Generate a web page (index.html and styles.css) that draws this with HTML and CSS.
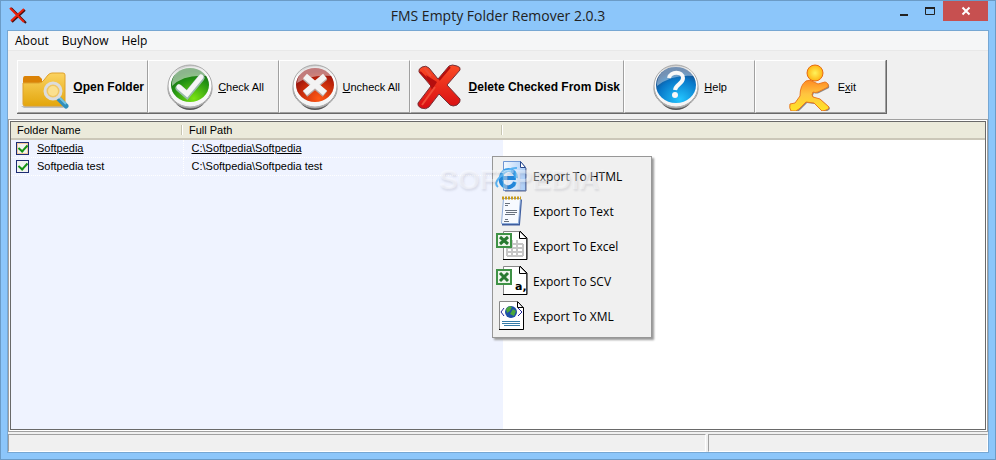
FILE: index.html
```html
<!DOCTYPE html>
<html lang="en">
<head>
    <meta charset="UTF-8">
    <title>FMS Empty Folder Remover 2.0.3</title>
    <link rel="stylesheet" href="styles.css">
</head>
<body>
    <div class="window">
        <header class="title-bar">
            <svg class="app-icon" viewBox="0 0 18 18">
                <path d="M2 2L17 17M16 4L3 16" stroke="#4a1010" stroke-width="2"/>
                <path d="M1 2L15 16M15 3L2 15" stroke="#e8200c" stroke-width="2"/>
            </svg>
            <h1>FMS Empty Folder Remover 2.0.3</h1>
            <div class="window-buttons">
                <button aria-label="Minimize"><svg viewBox="0 0 10 10"><path d="M1 9h8" stroke="#222" stroke-width="2"/></svg></button>
                <button aria-label="Maximize"><svg viewBox="0 0 10 10"><path d="M.5 1.500h9v7h-9z" fill="none" stroke="#222"/><path d="M0 2h10" stroke="#222" stroke-width="2"/></svg></button>
                <button class="close" aria-label="Close"><svg viewBox="0 0 10 10"><path d="M1.500 1.500l7 7M8.500 1.500l-7 7" stroke="#fff" stroke-width="2"/></svg></button>
            </div>
        </header>
        <div class="client">
            <nav class="menu-bar">
                <a href="#">About</a>
                <a href="#">BuyNow</a>
                <a href="#">Help</a>
            </nav>
            <div class="toolbar">
                <div class="tools">
                    <button class="tool strong">
                        <svg viewBox="0 0 48 48">
                            <defs>
                                <linearGradient id="folder" x2="0" y2="1"><stop stop-color="#fbd361"/><stop offset="1" stop-color="#e3a60c"/></linearGradient>
                            </defs>
                            <path d="M0 43h45l-3 2H3z" fill="#b9bdc2"/>
                            <path d="M2 16q0-3 2-3h14l3 3v12H2z" fill="#db8206"/>
                            <path d="M2 20h16q3 0 5-3l4-5q2-2 4-2h11q2 0 2 2v29q0 2-2 2H4q-2 0-2-2z" fill="url(#folder)" stroke="#dfa22c"/>
                            <path d="M38 36l7 7" stroke="#2f8ebc" stroke-width="5" stroke-linecap="round"/>
                            <path d="M38 34l7 7" stroke="#78c3df" stroke-width="2"/>
                            <circle cx="32" cy="28" r="8" fill="#efc664" stroke="#dcdcdc" stroke-width="3"/>
                            <circle cx="32" cy="28" r="5" fill="#fbe08f"/>
                        </svg>
                        <span><u>O</u>pen Folder</span>
                    </button>
                    <button class="tool">
                        <svg viewBox="0 0 48 48">
                            <defs>
                                <linearGradient id="rim" x2="0" y2="1"><stop stop-color="#c8c8c8"/><stop offset=".3" stop-color="#fff"/><stop offset="1" stop-color="#f4f4f4"/></linearGradient>
                                <radialGradient id="green" cx=".6" cy=".9" r=".8"><stop stop-color="#7ae313"/><stop offset=".7" stop-color="#229212"/><stop offset="1" stop-color="#176b19"/></radialGradient>
                            </defs>
                            <ellipse cx="24" cy="30" rx="18" ry="17" fill="#555"/>
                            <ellipse cx="24" cy="28" rx="20" ry="17" fill="#fff" stroke="#999"/>
                            <ellipse cx="24" cy="26" rx="22" ry="18" fill="#e4e4e4" stroke="#999"/>
                            <ellipse cx="24" cy="23" rx="22" ry="21" fill="url(#rim)" stroke="#aaa"/>
                            <ellipse cx="24" cy="22" rx="19" ry="17" fill="url(#green)"/>
                            <path d="M6 23C5-1 40-1 41 13Q18 11 6 23z" fill="#fff" opacity=".5"/>
                            <path d="M13 25l8 7 14-17" fill="none" stroke="#9ba" stroke-width="7" stroke-linecap="round"/>
                            <path d="M13 24l8 7 14-17" fill="none" stroke="#f5f5f5" stroke-width="5" stroke-linecap="round"/>
                        </svg>
                        <span><u>C</u>heck All</span>
                    </button>
                    <button class="tool uncheck">
                        <svg viewBox="0 0 48 48">
                            <defs>
                                <radialGradient id="red" cx=".6" cy=".9" r=".8"><stop stop-color="#ff5915"/><stop offset=".7" stop-color="#bd2309"/><stop offset="1" stop-color="#8e1111"/></radialGradient>
                            </defs>
                            <ellipse cx="24" cy="30" rx="18" ry="17" fill="#555"/>
                            <ellipse cx="24" cy="28" rx="20" ry="17" fill="#fff" stroke="#999"/>
                            <ellipse cx="24" cy="26" rx="22" ry="18" fill="#e4e4e4" stroke="#999"/>
                            <ellipse cx="24" cy="23" rx="22" ry="21" fill="url(#rim)" stroke="#aaa"/>
                            <ellipse cx="24" cy="22" rx="19" ry="17" fill="url(#red)"/>
                            <path d="M6 20C8-1 38-1 41 13Q20 11 6 20z" fill="#fff" opacity=".45"/>
                            <path d="M14 14l20 17M34 14L14 31" stroke="#b9a9a5" stroke-width="7"/>
                            <path d="M14 13l20 17M34 13L14 30" stroke="#f3f3f3" stroke-width="6"/>
                        </svg>
                        <span><u>U</u>ncheck All</span>
                    </button>
                    <button class="tool strong wide">
                        <svg viewBox="0 0 48 48">
                            <defs>
                                <linearGradient id="cross" x2="0" y2="1"><stop stop-color="#fb4b25"/><stop offset="1" stop-color="#d80d12"/></linearGradient>
                            </defs>
                            <path d="M2 9Q1 6 5 4q4-2 7 1l9 11L32 3q3-2 8 0 4 1 3 4L30 22l13 14q1 3-3 6-4 2-7 0L22 31 12 44q-3 3-8 1-4-2-3-5l13-17z" fill="url(#cross)" stroke="#73333a"/>
                            <path d="M3 9l13 13M22 17L33 4" stroke="#b50e0e" stroke-width="2"/>
                            <path d="M9 12l11 7-5 8z" fill="#b50e0e"/>
                            <path d="M7 5l7 8M18 24L5 42" stroke="#ef4d37" stroke-width="2"/>
                        </svg>
                        <span><u>D</u>elete Checked From Disk</span>
                    </button>
                    <button class="tool help">
                        <svg viewBox="0 0 48 48">
                            <defs>
                                <radialGradient id="blue" cx=".6" cy=".9" r=".8"><stop stop-color="#23c5ff"/><stop offset=".7" stop-color="#0877c8"/><stop offset="1" stop-color="#174882"/></radialGradient>
                            </defs>
                            <ellipse cx="24" cy="30" rx="18" ry="17" fill="#555"/>
                            <ellipse cx="24" cy="28" rx="20" ry="17" fill="#fff" stroke="#999"/>
                            <ellipse cx="24" cy="26" rx="22" ry="18" fill="#e4e4e4" stroke="#999"/>
                            <ellipse cx="24" cy="23" rx="22" ry="21" fill="url(#rim)" stroke="#aaa"/>
                            <ellipse cx="24" cy="22" rx="20" ry="18" fill="url(#blue)"/>
                            <path d="M5 23C4-1 40-1 42 13Q20 11 5 23z" fill="#fff" opacity=".4"/>
                            <path d="M17 15c1-7 14-7 14 0 0 6-7 6-8 12" fill="none" stroke="#f8f8f8" stroke-width="4"/>
                            <circle cx="23" cy="32" r="3" fill="#f8f8f8"/>
                        </svg>
                        <span><u>H</u>elp</span>
                    </button>
                    <button class="tool exit">
                        <svg viewBox="0 0 48 48">
                            <defs>
                                <radialGradient id="head"><stop stop-color="#fff35b"/><stop offset="1" stop-color="#ffb514"/></radialGradient>
                                <linearGradient id="runner" x2="0" y2="1"><stop stop-color="#ff8a22"/><stop offset=".45" stop-color="#ffc540"/><stop offset="1" stop-color="#ffe525"/></linearGradient>
                            </defs>
                            <path id="body" d="M20 18q4-2 8 1l4 2 7-2q4 1 3 5l-10 5q-3 1-5 0-2 3 0 5l7 2 9 8q0 3-7 4l-8-8-8-1-7 7q-3 3-8 2-2-3-1-7l5-1 5-7q0-11 6-15z" fill="#888" transform="translate(1 1)"/>
                            <path d="M20 18q4-2 8 1l4 2 7-2q4 1 3 5l-10 5q-3 1-5 0-2 3 0 5l7 2 9 8q0 3-7 4l-8-8-8-1-7 7q-3 3-8 2-2-3-1-7l5-1 5-7q0-11 6-15z" fill="url(#runner)" stroke="#e87922"/>
                            <circle cx="29" cy="10" r="8" fill="url(#head)" stroke="#e86a12"/>
                        </svg>
                        <span>E<u>x</u>it</span>
                    </button>
                </div>
            </div>
            <main class="folder-list">
                <table>
                    <thead>
                        <tr><th class="name">Folder Name</th><th class="path">Full Path</th><th></th></tr>
                    </thead>
                    <tbody>
                        <tr class="current">
                            <td><label><input type="checkbox" checked><span>Softpedia</span></label></td>
                            <td><span>C:\Softpedia\Softpedia</span></td>
                            <td></td>
                        </tr>
                        <tr>
                            <td><label><input type="checkbox" checked><span>Softpedia test</span></label></td>
                            <td><span>C:\Softpedia\Softpedia test</span></td>
                            <td></td>
                        </tr>
                        <tr class="rest"><td colspan="2"></td><td></td></tr>
                    </tbody>
                </table>
            </main>
            <footer class="status-bar">
                <div class="panel main-panel"></div>
                <div class="panel"></div>
            </footer>
        </div>
    </div>

    <div class="export-menu">
        <button>
            <svg viewBox="0 0 34 34">
                <defs>
                    <linearGradient id="page"><stop stop-color="#f4f9ff"/><stop offset="1" stop-color="#a9ccf7"/></linearGradient>
                </defs>
                <path d="M8.500 1.500h17l5 6v23h-22z" fill="url(#page)" stroke="#7096d3"/>
                <path d="M31 8v23H10" fill="none" stroke="#5a6890"/>
                <path d="M25.500 1.500v6h5z" fill="#fff" stroke="#27468a"/>
                <path d="M21 18H6a7 7 0 0 0 14 4" fill="none" stroke="#2386d9" stroke-width="4"/>
                <path d="M6 17a7 7 0 0 1 15 1" fill="none" stroke="#3b9ee8" stroke-width="4"/>
                <path d="M3 27Q-2 23 7 15T22 8" fill="none" stroke="#5bb3f2" stroke-width="2"/>
                <path d="M7 13q4-4 9-2" fill="none" stroke="#8fd3ff"/>
            </svg>
            <span>Export To HTML</span>
        </button>
        <button>
            <svg viewBox="0 0 34 34">
                <path d="M7 29.500h17l2-25" fill="none" stroke="#3e5d9e" stroke-width="2"/>
                <path d="M8.500 3.500h17l-2 25h-17z" fill="#f7faff" stroke="#8cabd9"/>
                <path d="M7 3h19" stroke="#c79a1b" stroke-width="3" stroke-dasharray="2 1"/>
                <path d="M10 8.500h5M10 10.500h3M10 15.500h12M11 17.500h11M10 19.500h10M10 24.500h3M9 26.500h5" stroke="#68717d"/>
            </svg>
            <span>Export To Text</span>
        </button>
        <button>
            <svg viewBox="0 0 34 34">
                <path d="M8.500 1.500h16l7 7v21h-23z" fill="#fff" stroke="#888"/>
                <path d="M24.500 1.500v7h7" fill="none" stroke="#000"/>
                <path d="M25 1l7 7v21.500H8" fill="none" stroke="#000"/>
                <path d="M12 10h5M12 14h16M12 18h16M12 22h16M12 26h16M12 10v16M17 10v16M22 10v16M28 14v12" fill="none" stroke="#c6c6c6" stroke-width="2"/>
                <path d="M2 4h14v13H2z" fill="#f0f5ed" stroke="#3f9246" stroke-width="2"/>
                <path d="M5 7l8 7M13 7l-8 7" stroke="#287a30" stroke-width="3"/>
            </svg>
            <span>Export To Excel</span>
        </button>
        <button>
            <svg viewBox="0 0 34 34">
                <path d="M8.500 1.500h16l7 7v21h-23z" fill="#fff" stroke="#888"/>
                <path d="M24.500 1.500v7h7" fill="none" stroke="#000"/>
                <path d="M25 1l7 7v21.500H8" fill="none" stroke="#000"/>
                <path d="M2 5h14v14H2z" fill="#f0f5ed" stroke="#3f9246" stroke-width="2"/>
                <path d="M5 8l8 8M13 8l-8 8" stroke="#287a30" stroke-width="3"/>
                <text x="20" y="25">a,</text>
            </svg>
            <span>Export To SCV</span>
        </button>
        <button>
            <svg viewBox="0 0 34 34">
                <path d="M4.500 1.500h18l6 6v22h-24z" fill="#fff" stroke="#888"/>
                <path d="M22.500 1.500v6h6" fill="none" stroke="#000"/>
                <path d="M23 2l5.500 6v21.500H4" fill="none" stroke="#000"/>
                <circle cx="16" cy="12" r="6" fill="#1e4fa8"/>
                <path d="M11 9q3-4 6-2l-2 4-3 2zM18 9l3 2-2 5-4-2z" fill="#49a83b"/>
                <path d="M9 8l-3 4 3 4M23 8l4 4-4 4" fill="none" stroke="#22279b"/>
                <path d="M7 21.500h18M7 23.500h18M9 25.500h16" stroke="#347ba8"/>
            </svg>
            <span>Export To XML</span>
        </button>
    </div>
    <div class="watermark">SOFTPEDIA<sup>®</sup></div>
</body>
</html>
```
FILE: styles.css
```css
* {
    box-sizing: border-box;
}
body {
    margin: 0;
    font-family: "Liberation Sans", Arial, sans-serif;
    font-size: 11px;
    color: #000;
}
button {
    margin: 0;
    padding: 0;
    border: none;
    background: none;
    font: inherit;
    color: inherit;
}
.window {
    height: 100vh;
    display: flex;
    flex-direction: column;
    padding: 0 7px 7px;
    background: #8cc6fa;
    border: 1px solid #6b9bc6;
}
.title-bar {
    display: grid;
    grid-template-columns: 140px 1fr 140px;
    height: 30px;
}
.app-icon {
    width: 18px;
    height: 18px;
    margin: 5px 1px;
}
h1 {
    margin: 0;
    font-family: "Open Sans", sans-serif;
    font-size: 14px;
    font-weight: normal;
    line-height: 30px;
    text-align: center;
    color: #222;
}
.window-buttons {
    display: flex;
    justify-content: flex-end;
    align-items: flex-start;
}
.window-buttons button {
    display: grid;
    place-items: center;
    width: 26px;
    height: 20px;
}
.window-buttons svg {
    width: 10px;
    height: 10px;
}
.window-buttons .close {
    width: 45px;
    background: #c75050;
}
.client {
    flex: 1;
    display: flex;
    flex-direction: column;
    background: #f0f0f0;
    outline: 1px solid #76a7d3;
}
.menu-bar {
    display: flex;
    gap: 13px;
    height: 20px;
    padding-left: 7px;
    background: #f5f6f7;
    border-bottom: 1px solid #e8e8e8;
    font-family: "Open Sans", sans-serif;
    font-size: 12px;
    line-height: 20px;
}
.menu-bar a {
    color: #000;
    text-decoration: none;
}
.toolbar {
    display: flex;
    padding: 9px 9px 5px;
}
.tools {
    display: flex;
    border-right: 1px solid #696969;
    border-bottom: 1px solid #696969;
}
.tool {
    display: flex;
    align-items: center;
    justify-content: flex-end;
    gap: 4px;
    width: 131px;
    height: 53px;
    padding-right: 14px;
    border: 1px solid;
    border-color: #fff #a0a0a0 #a0a0a0 #fff;
    font-size: 11px;
    white-space: nowrap;
}
.tool svg {
    flex: none;
    width: 48px;
    height: 48px;
}
.tool.uncheck {
    padding-right: 9px;
}
.tool.help {
    padding-right: 27px;
}
.tool.exit {
    padding-right: 29px;
}
.tool.wide {
    width: 214px;
}
.tool.strong {
    padding-right: 3px;
    font-size: 12px;
    font-weight: bold;
}
.folder-list {
    flex: 1;
    display: flex;
    padding: 2px;
    background: #fff;
    border: 1px solid #a0a0a0;
    outline: 1px solid #696969;
    outline-offset: -3px;
}
table {
    width: 100%;
    table-layout: fixed;
    border-collapse: collapse;
}
th {
    height: 17px;
    padding: 0 0 0 6px;
    background: #ebeadb;
    border-bottom: 2px solid #cbc7b8;
    font-weight: normal;
    text-align: left;
}
th.name {
    width: 172px;
}
th.path {
    width: 320px;
}
th.name,
th.path {
    background: linear-gradient(90deg, #c7c5b2 50%, #fff 50%) right center / 2px 10px no-repeat #ebeadb;
}
td {
    height: 18px;
    padding: 0 0 0 8px;
    background: #eff3ff;
    border-bottom: 1px dotted #fff;
}
td:first-child {
    padding-left: 5px;
    border-right: 1px dotted #fff;
}
td:last-child {
    background: #fff;
}
.rest td {
    height: auto;
    border: none;
}
.current span {
    text-decoration: underline;
}
td label {
    display: flex;
    align-items: center;
    gap: 8px;
}
input {
    appearance: none;
    display: grid;
    place-items: center;
    width: 13px;
    height: 13px;
    margin: 0;
    border: 1px solid #1c2c72;
    background: #f2f3ef;
}
.current input {
    box-shadow: inset 0 0 0 1px #f3c99b;
}
input:checked::before {
    content: "";
    width: 4px;
    height: 7px;
    margin-bottom: 2px;
    border: solid #159315;
    border-width: 0 2px 2px 0;
    transform: rotate(42deg);
}
.status-bar {
    display: flex;
    gap: 2px;
    height: 20px;
    padding-top: 2px;
}
.panel {
    flex: 2;
    border: 1px solid;
    border-color: #a0a0a0 #fff #fff #a0a0a0;
}
.main-panel {
    flex: 5;
}
/* popup sits over the list */
.export-menu {
    position: absolute;
    left: 492px;
    top: 156px;
    display: flex;
    flex-direction: column;
    padding: 2px 2px 3px;
    width: 160px;
    background: #f0f0f0;
    border: 1px solid #979797;
    box-shadow: 2px 2px 2px #999;
    font-family: "Open Sans", sans-serif;
    font-size: 12px;
}
.export-menu button {
    display: flex;
    align-items: center;
    gap: 4px;
    height: 35px;
}
.export-menu svg {
    width: 34px;
    height: 34px;
}
.export-menu text {
    font: bold 11px "DejaVu Sans", sans-serif;
}
.watermark {
    position: absolute;
    left: 439px;
    top: 162px;
    color: rgba(255, 255, 255, 0.4);
    font-size: 28px;
    font-weight: bold;
    line-height: 36px;
    text-shadow: 1px 2px 2px rgba(100, 100, 120, 0.15);
    pointer-events: none;
}
.watermark sup {
    font-size: 8px;
    line-height: 0;
    vertical-align: 14px;
}
```
